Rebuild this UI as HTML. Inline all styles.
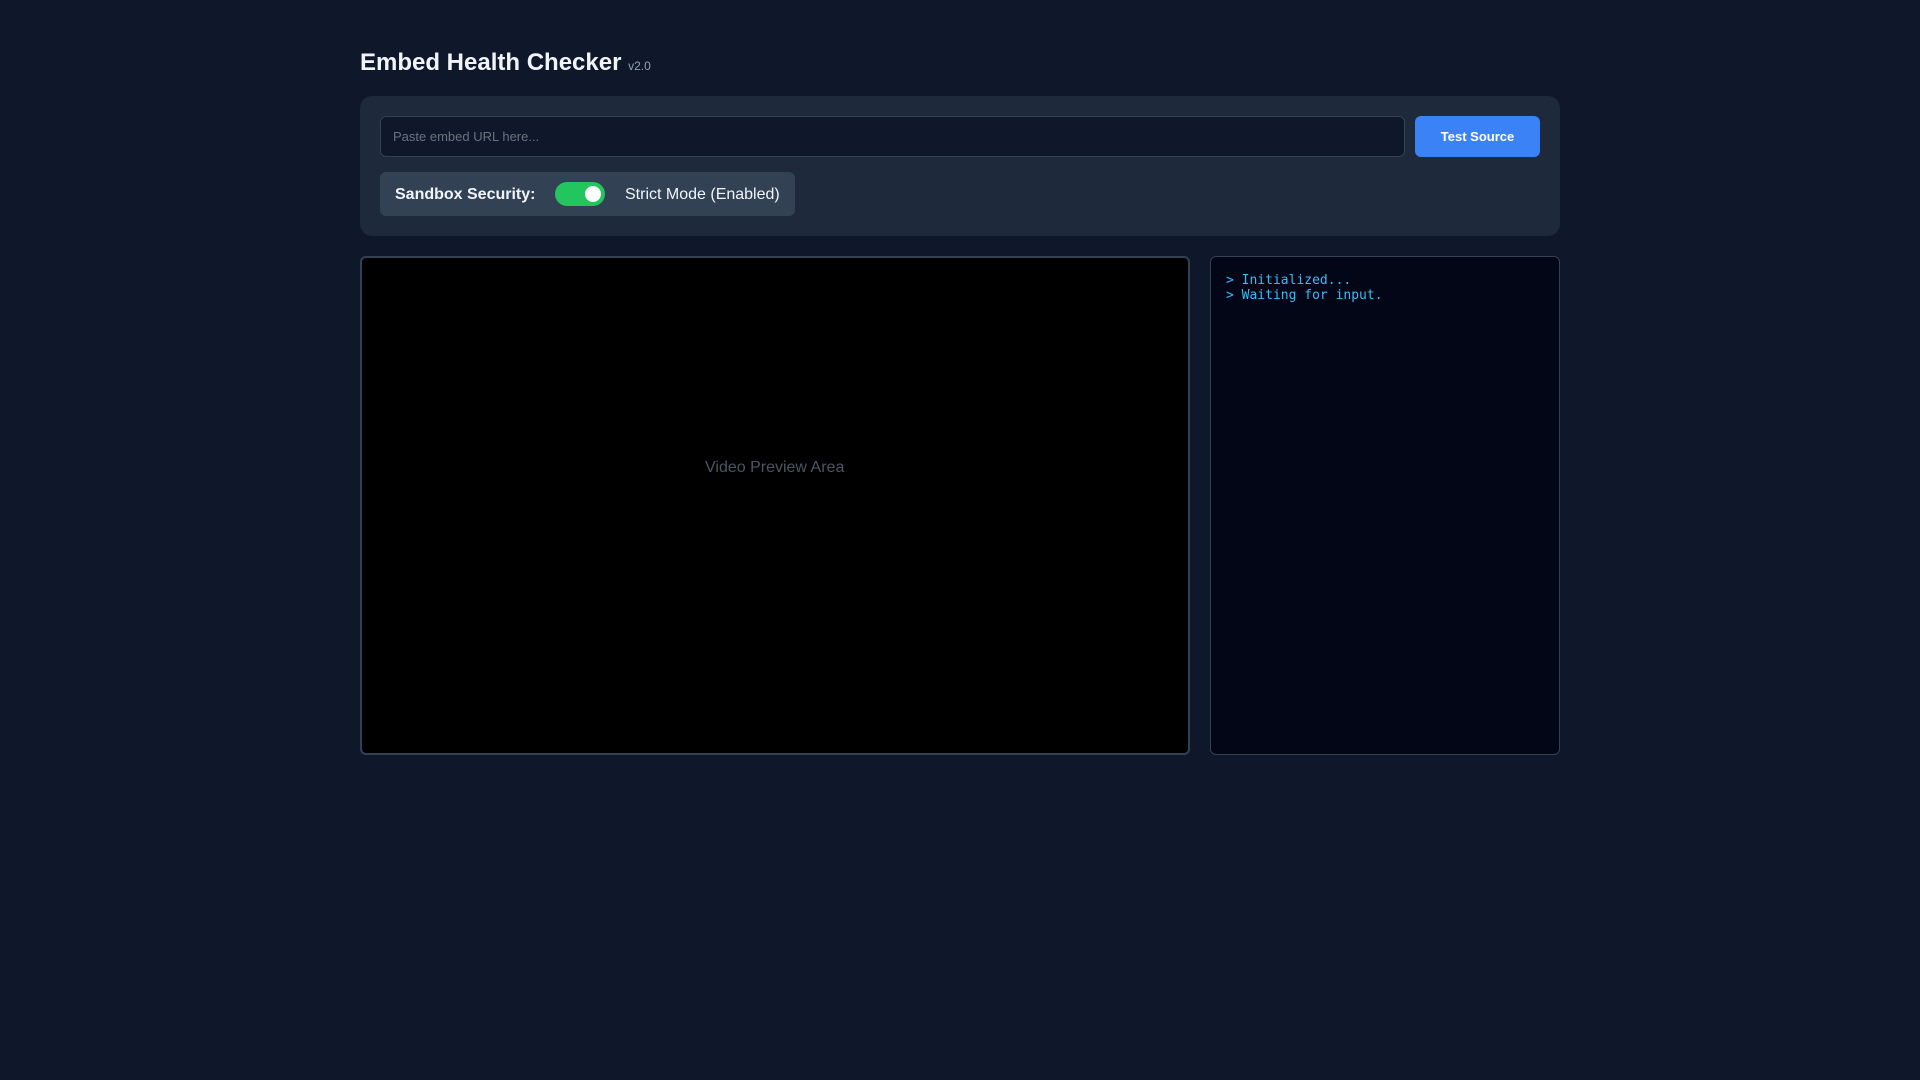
<!DOCTYPE html>
<html><head><style>
*{box-sizing:border-box;margin:0;padding:0}
body{width:1920px;height:1080px;background:#0f172a;font-family:"Liberation Sans",sans-serif;position:relative;overflow:hidden}
.a{position:absolute}
</style></head><body>
<div class="a" style="left:360px;top:49px;font-size:24px;font-weight:bold;color:#f1f5f9;white-space:nowrap">Embed Health Checker <span style="font-size:12px;font-weight:normal;color:#94a3b8">v2.0</span></div>
<div class="a" style="left:360px;top:96px;width:1200px;height:140px;background:#1e293b;border-radius:12px"></div>
<div class="a" style="left:380px;top:116px;width:1025px;height:41px;background:#0f172a;border:1px solid #334155;border-radius:6px;color:#6b7280;font-size:13px;padding:12px 0 0 12px">Paste embed URL here...</div>
<div class="a" style="left:1415px;top:116px;width:125px;height:41px;background:#3b82f6;border-radius:6px;color:#fff;font-size:13px;font-weight:bold;text-align:center;line-height:41px">Test Source</div>
<div class="a" style="left:380px;top:172px;width:415px;height:44px;background:#334155;border-radius:6px"></div>
<div class="a" style="left:395px;top:186px;font-size:16px;font-weight:bold;color:#f1f5f9">Sandbox Security:</div>
<div class="a" style="left:555px;top:182px;width:50px;height:24px;background:#22c55e;border-radius:12px"></div>
<div class="a" style="left:585px;top:186px;width:16px;height:16px;background:#fff;border-radius:50%"></div>
<div class="a" style="left:625px;top:186px;font-size:16px;color:#f1f5f9">Strict Mode (Enabled)</div>
<div class="a" style="left:360px;top:256px;width:830px;height:499px;background:#000;border:2px solid #334155;border-radius:6px"></div>
<div class="a" style="left:705px;top:459px;font-size:16px;color:#4b5563">Video Preview Area</div>
<div class="a" style="left:1210px;top:256px;width:350px;height:499px;background:#020617;border:1px solid #334155;border-radius:6px;padding:16px 15px;font-family:'DejaVu Sans Mono',monospace;font-size:13px;line-height:15px;color:#38bdf8">&gt; Initialized...<br>&gt; Waiting for input.</div>
</body></html>
